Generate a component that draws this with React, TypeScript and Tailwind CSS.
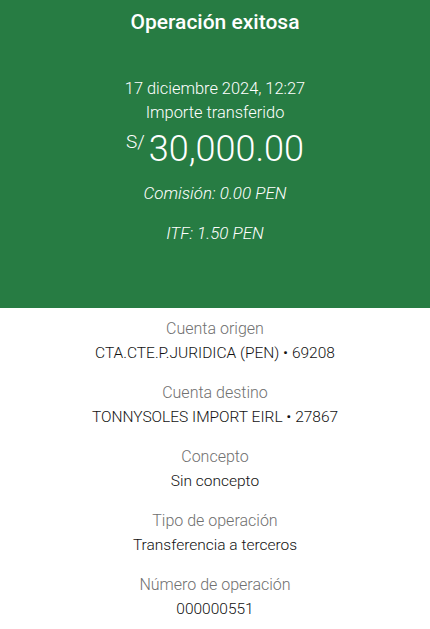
const details = [
  { label: "Cuenta origen", value: "CTA.CTE.P.JURIDICA (PEN) • 69208" },
  { label: "Cuenta destino", value: "TONNYSOLES IMPORT EIRL • 27867" },
  { label: "Concepto", value: "Sin concepto" },
  { label: "Tipo de operación", value: "Transferencia a terceros" },
  { label: "Número de operación", value: "000000551" },
];

export default function App() {
  return (
    <main className="min-h-screen w-[430px] overflow-hidden bg-white font-['Roboto',sans-serif] text-center">
      <section className="flex h-[308px] flex-col items-center bg-[#277c43] text-white">
        <h1 className="mt-[9px] text-[21px] font-medium leading-[26px]">Operación exitosa</h1>
        <p className="mt-[42px] text-[16.4px] font-light leading-6">17 diciembre 2024, 12:27</p>
        <p className="text-[16.4px] font-light leading-6">Importe transferido</p>
        <div className="mt-[4px] flex items-start">
          <span className="mt-[3px] text-[19px] font-light leading-5">S/</span>
          <span className="ml-[4px] text-[36px] font-light leading-[40px]">30,000.00</span>
        </div>
        <p className="mt-[12px] text-[17px] font-light italic leading-6">Comisión: 0.00 PEN</p>
        <p className="mt-[16px] text-[17px] font-light italic leading-6">ITF: 1.50 PEN</p>
      </section>
      <section className="flex flex-col items-center gap-[16px] pt-[9px]">
        {details.map((d) => (
          <div key={d.label} className="flex flex-col items-center">
            <span className="text-[16px] font-light leading-6 text-[#707070]">{d.label}</span>
            <span className="text-[15.5px] font-light leading-6 text-[#121212]">{d.value}</span>
          </div>
        ))}
      </section>
    </main>
  );
}
